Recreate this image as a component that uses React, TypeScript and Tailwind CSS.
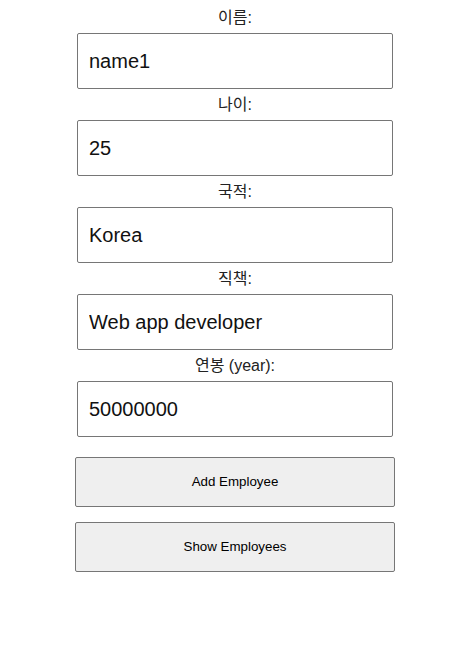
import React from 'react';

const fields = [
  { label: '이름:', value: 'name1' },
  { label: '나이:', value: '25' },
  { label: '국적:', value: 'Korea' },
  { label: '직책:', value: 'Web app developer' },
  { label: '연봉 (year):', value: '50000000' },
];

const font = { fontFamily: '"Liberation Sans", "Noto Sans CJK KR", Arial, sans-serif' };

const App = () => {
  return <div className="min-h-[656px] bg-white pl-[75px] pt-[2px]" style={font}>
      <div className="w-[320px] flex flex-col">
        {fields.map(f => <div key={f.label} className="flex flex-col items-center">
            <label className="h-[31px] pt-[6px] text-[16px] leading-[20px] text-[#222]">{f.label}</label>
            <input type="text" defaultValue={f.value} className="ml-[2px] self-start w-[316px] h-[56px] border border-[#767676] rounded-[2px] px-[11px] text-[20px] text-[#111] outline-none" />
          </div>)}
        <button className="mt-[20px] w-[320px] h-[50px] bg-[#efefef] border border-[#767676] rounded-[2px] text-[13.33px] text-black">
          Add Employee
        </button>
        <button className="mt-[15px] w-[320px] h-[50px] bg-[#efefef] border border-[#767676] rounded-[2px] text-[13.33px] text-black">
          Show Employees
        </button>
      </div>
    </div>;
};
export default App;
